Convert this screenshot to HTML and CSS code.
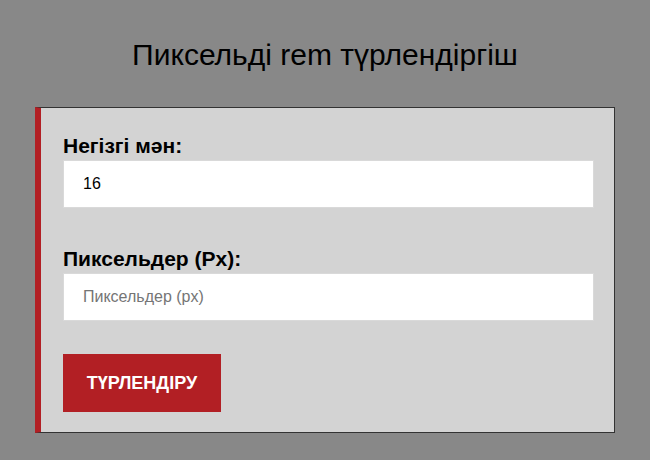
FILE: index.html
```html
<!DOCTYPE html>
<html lang="kk">
<head>
<meta charset="utf-8">
<title>Пиксельді rem түрлендіргіш</title>
<link rel="stylesheet" href="styles.css">
</head>
<body>
<h1 class="title">Пиксельді rem түрлендіргіш</h1>
<form class="card">
  <div class="field">
    <label class="label" for="base">Негізгі мән:</label>
    <input class="input" id="base" type="text" value="16">
  </div>
  <div class="field">
    <label class="label" for="px">Пиксельдер (Px):</label>
    <input class="input" id="px" type="text" placeholder="Пиксельдер (px)">
  </div>
  <button class="btn" type="button">ТҮРЛЕНДІРУ</button>
</form>
</body>
</html>
```
FILE: styles.css
```css
html, body {
  margin: 0;
  padding: 0;
}
body {
  background: #888888;
  font-family: "Liberation Sans", Arial, sans-serif;
  color: #000;
  height: 460px;
  overflow: hidden;
}
.title {
  margin: 0 0 35px;
  padding-top: 38px;
  text-align: center;
  font-size: 30px;
  font-weight: normal;
  line-height: 34px;
}
.card {
  width: 580px;
  box-sizing: border-box;
  margin: 0 auto;
  background: #d3d3d3;
  border: 1px solid #333;
  border-left: 6px solid #b21f24;
  padding: 26px 20px 20px 22px;
}
.field {
  margin-bottom: 39px;
}
.field + .field {
  margin-bottom: 33px;
}
.label {
  display: block;
  font-size: 21px;
  font-weight: bold;
  line-height: 24px;
  margin-bottom: 2px;
}
.input {
  display: block;
  width: 100%;
  box-sizing: border-box;
  height: 48px;
  border: 1px solid #d9d9d9;
  background: #fff;
  padding: 0 19px;
  font-family: "Liberation Sans", Arial, sans-serif;
  font-size: 16px;
  color: #000;
  outline: none;
}
.input::placeholder {
  color: #757575;
}
.btn {
  display: block;
  width: 158px;
  height: 58px;
  border: none;
  background: #b21f24;
  color: #fff;
  font-family: "Liberation Sans", Arial, sans-serif;
  font-size: 18px;
  font-weight: bold;
  padding: 0;
}
```
